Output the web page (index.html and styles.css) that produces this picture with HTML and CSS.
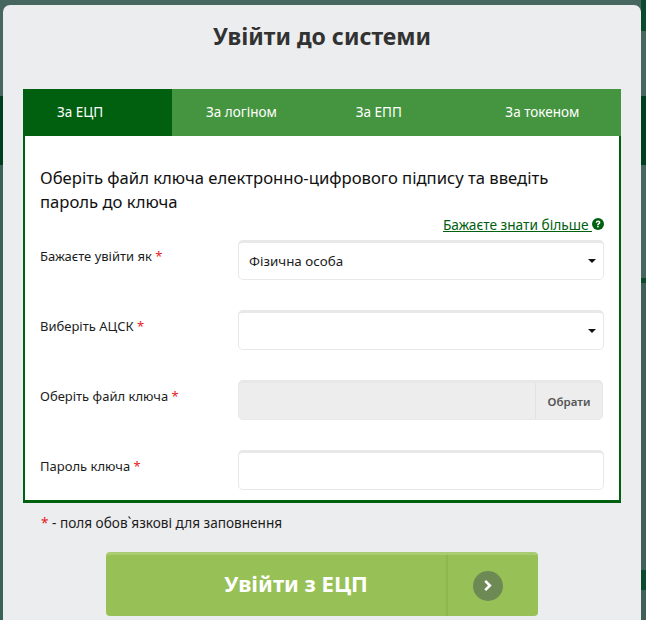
FILE: index.html
```html
<!DOCTYPE html>
<html lang="uk">
<head>
<meta charset="utf-8">
<title>Увійти до системи</title>
<link rel="stylesheet" href="styles.css">
</head>
<body>
<div class="modal">
  <h1 class="title">Увійти до системи</h1>
  <div class="panel">
    <div class="tabs">
      <div class="tab active">За ЕЦП</div>
      <div class="tab">За логіном</div>
      <div class="tab">За ЕПП</div>
      <div class="tab">За токеном</div>
    </div>
    <div class="body">
      <p class="lead">Оберіть файл ключа електронно-цифрового підпису та введіть пароль до ключа</p>
      <div class="more"><a href="#">Бажаєте знати більше </a><svg class="help" viewBox="0 0 16 16" width="12" height="12"><circle cx="8" cy="8" r="8" fill="#006010"/><path d="M5 6.2C5.1 4.3 6.4 3.2 8.1 3.2c1.8 0 3.1 1.1 3.1 2.7 0 2.1-2.3 2-2.3 3.7H6.9c0-2.7 2.2-2.5 2.2-3.7 0-.6-.4-1-1-1-.7 0-1.1.5-1.2 1.3z" fill="#fff"/><rect x="6.9" y="10.5" width="2" height="2" fill="#fff"/></svg></div>
      <div class="row"><label class="label">Бажаєте увійти як <i>*</i></label><div class="field select"><span>Фізична особа</span><b class="caret"></b></div></div>
      <div class="row"><label class="label">Виберіть АЦСК <i>*</i></label><div class="field select"><b class="caret"></b></div></div>
      <div class="row"><label class="label">Оберіть файл ключа <i>*</i></label><div class="field file"><div class="file-name"></div><div class="file-btn">Обрати</div></div></div>
      <div class="row"><label class="label">Пароль ключа <i>*</i></label><div class="field"></div></div>
    </div>
  </div>
  <p class="note"><i>*</i> - поля обов`язкові для заповнення</p>
  <div class="submit">
    <div class="submit-text">Увійти з ЕЦП</div>
    <div class="submit-icon"><span class="circle"><svg viewBox="0 0 10 14" width="10" height="13"><path d="M2 2l5 5-5 5" fill="none" stroke="#fff" stroke-width="2.8"/></svg></span></div>
  </div>
</div>
</body>
</html>
```
FILE: styles.css
```css
* { box-sizing: border-box; }
html, body { height: 100%; }
body {
  margin: 0;
  overflow: hidden;
  background:
    linear-gradient(#0b4a2e 0 31px, #47665f 31px 96px, #003e20 96px 165px, #47665f 165px 278px, #0b4a2e 278px 283px, #3f5f58 283px 570px, #0b4a2e 570px 590px, #3f5f58 590px) right top / 5px 100% no-repeat,
    linear-gradient(#47665f 0 96px, #003e20 96px 165px, #3a6358 165px) left top / 3px 100% no-repeat,
    #47665f;
  font-family: "Noto Sans", "Open Sans", sans-serif;
  color: #1c1c1c;
  padding: 5px 5px 0 3px;
}
.modal {
  background: #ecedef;
  border-radius: 7px 7px 0 0;
  height: 615px;
  padding: 0 20px;
}
.title {
  margin: 0;
  height: 84px;
  padding-top: 15px;
  text-align: center;
  font-size: 23px;
  line-height: 32px;
  font-weight: 700;
  color: #323232;
}
.panel { width: 598px; }
.tabs { display: flex; height: 47px; background: #459540; }
.tab {
  flex: 1;
  color: #fff;
  font-size: 13.5px;
  line-height: 47px;
  padding-left: 34px;
}
.tab.active { flex: 0 0 149px; background: #006010; }
.body {
  height: 367px;
  background: #fff;
  border: solid #006010;
  border-width: 0 2px 3px;
  padding: 30px 15px 0;
}
.lead { margin: 0; padding-right: 10px; font-size: 16.65px; font-weight: 400; line-height: 24px; height: 47px; color: #111; }
.more { height: 27px; padding-bottom: 5px; font-size: 13.7px; display: flex; justify-content: flex-end; align-items: center; }
.more a { color: #006010; white-space: pre; }
.row { display: flex; height: 40px; margin-bottom: 30px; align-items: flex-start; }
.label { width: 198px; font-size: 13px; line-height: 33px; }
i { color: #e8201c; font-style: normal; }
.field {
  width: 366px;
  height: 40px;
  border: 1px solid #e8e8e8;
  border-top-width: 3px;
  border-radius: 5px;
  background: #fff;
  display: flex;
  align-items: center;
}
.select { padding: 0 7px 0 10px; justify-content: space-between; font-size: 13.4px; }
.select .caret { margin-left: auto; }
.caret { width: 0; height: 0; border: solid transparent; border-width: 4px 4px 0; border-top-color: #111; }
.file { background: #ededed; align-items: stretch; width: 365px; }
.file-name { flex: 1; }
.file-btn { width: 67px; border-left: 1px solid #e2e2e2; text-align: center; font-size: 11.5px; font-weight: 600; line-height: 38px; color: #555; }
.note { margin: 0; height: 49px; padding: 11px 0 0 18px; font-size: 13.6px; line-height: 18px; }
.submit {
  margin-left: 83px;
  width: 432px;
  height: 64px;
  display: flex;
  background: #97c157;
  border-top: 3px solid #a9cc72;
  border-radius: 4px;
}
.submit-text { width: 342px; text-align: center; color: #fff; font-size: 22px; font-weight: 700; line-height: 57px; border-right: 2px solid #8cb84f; padding-left: 40px; }
.submit-icon { flex: 1; display: flex; align-items: center; justify-content: center; padding-right: 10px; }
.circle { width: 30px; height: 30px; border-radius: 50%; background: #6d8a54; display: flex; align-items: center; justify-content: center; }
```
